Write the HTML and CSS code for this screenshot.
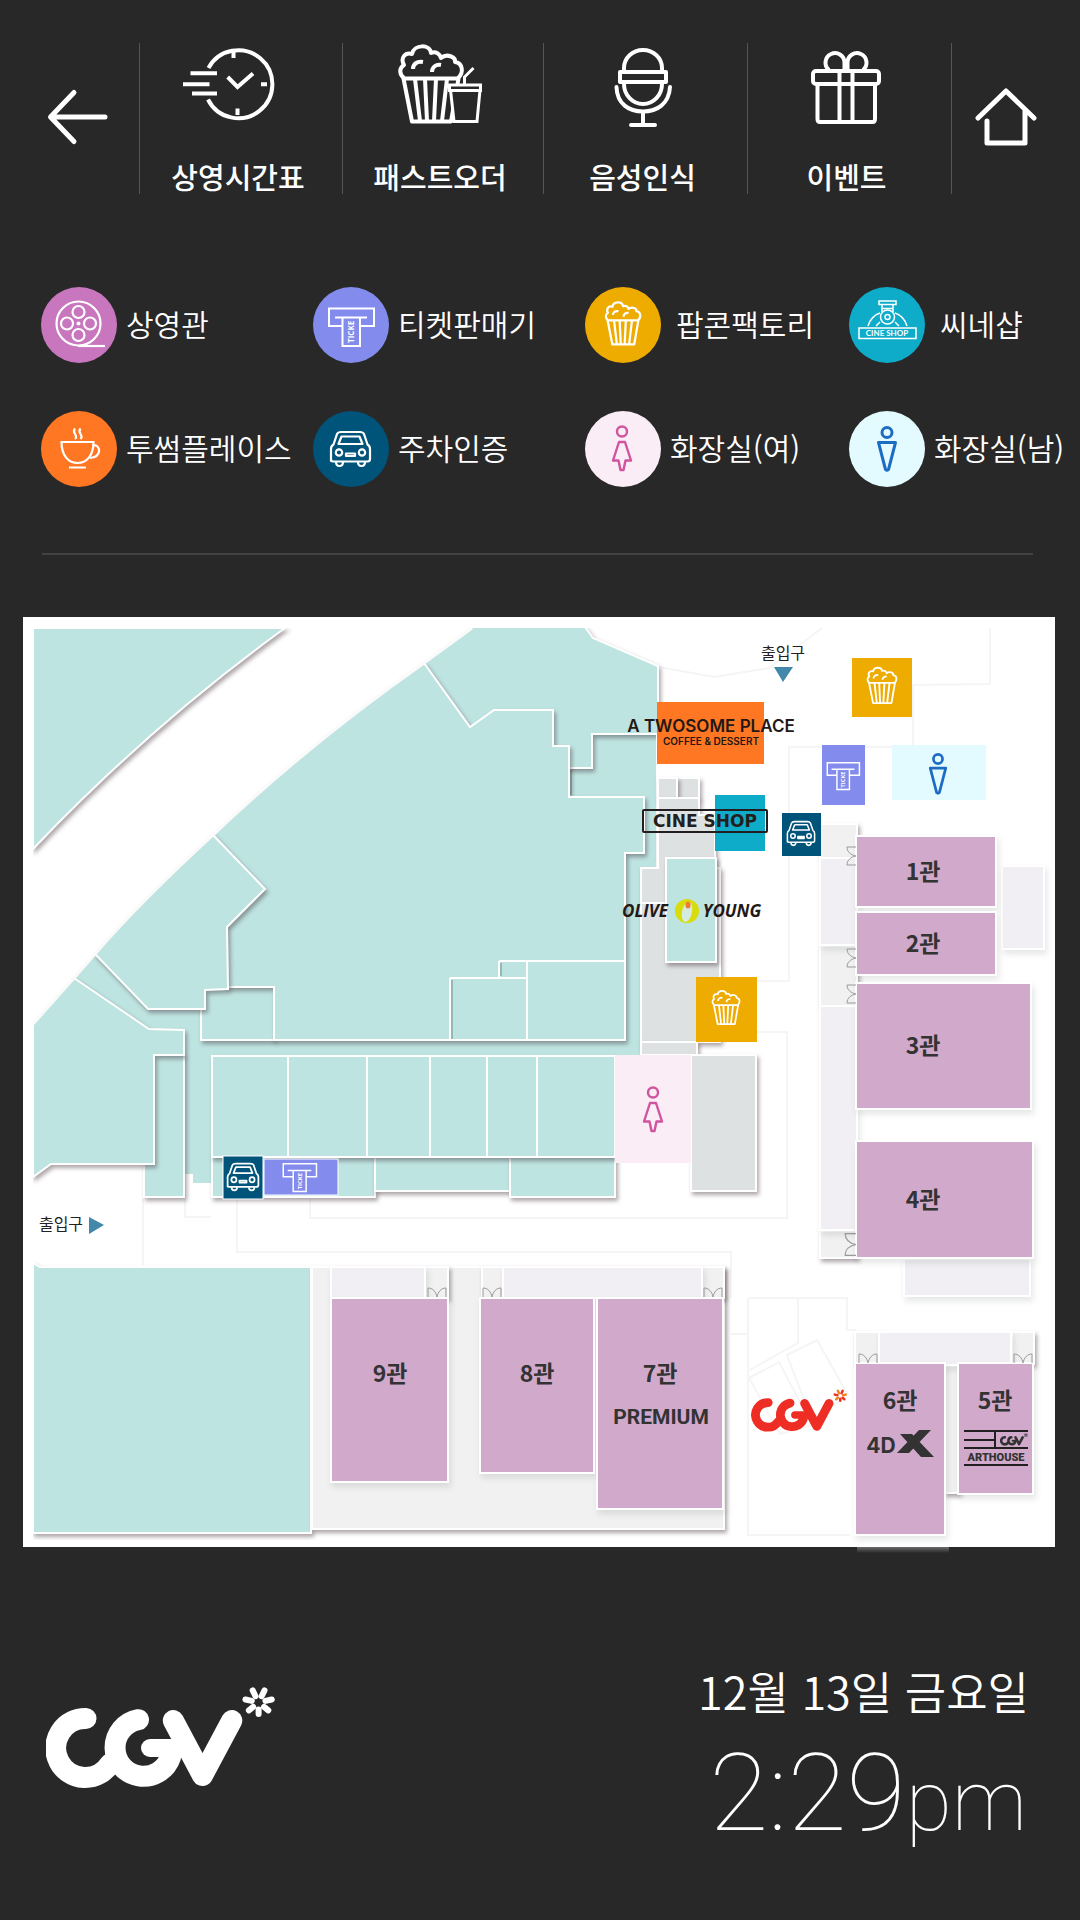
FILE: index.html
```html
<!DOCTYPE html>
<html lang="ko">
<head>
<meta charset="utf-8">
<meta name="viewport" content="width=device-width, initial-scale=1">
<title>CGV 층별 안내</title>
<link rel="stylesheet" href="styles.css">
</head>
<body>
<svg class="sprite" aria-hidden="true">
  <symbol id="popcorn" viewBox="397 43 68 80">
    <g fill="none" stroke="currentColor" stroke-width="4" stroke-linejoin="round">
      <path d="M403.500 77.500H458.500L451 120.500H412ZM415 78L420 120M425 78L427 120M436 78L434 120M447 78L442 120"/>
      <path d="M404 77C399 73 399 67 404 64C400 57 405 51 412 53C414 43 430 43 431 52C436 50 440 53 441 57C447 52 456 56 455 61C463 62 464 72 458 77"/>
      <path d="M413 68C413 63 417 60 423 61M432 71C432 66 436 63 441 64"/>
    </g>
  </symbol>
  <symbol id="ticket" viewBox="13 19 50 42">
    <g fill="none" stroke="currentColor" stroke-width="2">
      <path d="M29 39H16V21.500H61V39H48M22 30.500H54M29.500 31V59H47V31"/>
    </g>
    <text class="ticket-word" transform="translate(41 56) rotate(-90)">TICKE</text>
  </symbol>
  <symbol id="car" viewBox="16 19 43 38">
    <g fill="none" stroke="currentColor" stroke-width="2.200" stroke-linejoin="round">
      <path d="M18 50V38Q18 35 20.500 33.500L24 23Q25 21 28 21H47Q50 21 51 23L54.500 33.500Q57 35 57 38V48Q57 50.500 54.500 50.500H20Q18 50.500 18 48Z"/>
      <path d="M25.500 33L28.500 25.500H46.500L49.500 33Z"/>
      <circle cx="26" cy="41.500" r="3.200"/><circle cx="49" cy="41.500" r="3.200"/>
      <path d="M33 42.500H42V45H33ZM23 51Q23 55 26.500 55T30 51M45 51Q45 55 48.500 55T52 51"/>
    </g>
  </symbol>
  <symbol id="woman" viewBox="26 13 22 48">
    <g fill="none" stroke="currentColor" stroke-width="2.400" stroke-linejoin="round">
      <circle cx="37" cy="20.500" r="5"/>
      <path d="M34 31H40L46 49.500H40.500L38.500 59H35.500L33.500 49.500H28Z"/>
    </g>
  </symbol>
  <symbol id="man" viewBox="28 14 22 48">
    <g fill="none" stroke="currentColor" stroke-width="3" stroke-linejoin="round">
      <circle cx="39" cy="21.500" r="5"/>
      <path d="M30.500 31.500H47.500L40.500 58.500Q39 60 37.500 58.500Z"/>
    </g>
  </symbol>
  <symbol id="door" viewBox="0 0 20 10">
    <path d="M1 10V1C6 1 9 5 10 10C11 5 14 1 19 1V10" fill="none" stroke="#999" stroke-width="1"/>
  </symbol>
  <symbol id="cgv" viewBox="46 1686 230 103">
    <g fill="none" stroke="currentColor" stroke-width="21" stroke-linecap="round" stroke-linejoin="round">
      <path d="M86 1718.500A29.500 29.500 0 1 0 110 1764"/>
      <path d="M138.500 1719.700A28.500 28.500 0 1 0 170.500 1757"/>
      <path d="M150 1748H176" stroke-width="18"/>
      <path d="M173.300 1720.500L202.500 1775.500L231.800 1720.500"/>
    </g>
    <g fill="none" stroke="currentColor" stroke-width="6" stroke-linecap="round">
      <path d="M258.600 1709.500V1714"/>
      <path d="M258.600 1709.500V1716" transform="rotate(103 258.600 1702.500)"/>
      <path d="M258.600 1709.500V1716" transform="rotate(206 258.600 1702.500)"/>
      <path d="M258.600 1709.500V1715" transform="rotate(309 258.600 1702.500)"/>
    </g>
    <g class="spark" fill="none" stroke-width="6" stroke-linecap="round">
      <path d="M258.600 1709.500V1715" transform="rotate(51 258.600 1702.500)"/>
      <path d="M258.600 1709.500V1716" transform="rotate(154 258.600 1702.500)"/>
      <path d="M258.600 1709.500V1716" transform="rotate(257 258.600 1702.500)"/>
    </g>
  </symbol>
</svg>

<header>
  <nav class="topbar" aria-label="주 메뉴">
    <a class="topbar-side" href="#back" aria-label="뒤로">
      <svg class="side-icon" viewBox="46 87 64 60"><path d="M105 117H51M74 92.500L50.500 117L74 141.500" fill="none" stroke="currentColor" stroke-width="5" stroke-linecap="round" stroke-linejoin="round"/></svg>
    </a>
    <a class="topbar-item" href="#timetable">
      <svg class="menu-icon" viewBox="184 42 110 84">
        <g fill="none" stroke="currentColor" stroke-width="4">
          <path d="M209.500 67A34 34 0 1 1 209 98.500"/>
          <path d="M191.500 72.300H218M184 83.300H210.500M193 92.600H218M234.500 51V57M262 83.300H268M238.500 107.500V114M228.700 76L238.500 86L254 72.500"/>
        </g>
      </svg>
      <span>상영시간표</span>
    </a>
    <a class="topbar-item" href="#fastorder">
      <svg class="menu-icon" viewBox="385 42 110 84">
        <use href="#popcorn" x="397" y="43" width="68" height="80"/>
        <g class="cup" stroke="currentColor" stroke-width="3">
          <path d="M450.500 89L454 120.500H477L480 89Z"/>
          <path d="M449.500 84H480.500V89.500H449.500Z"/>
          <path d="M464.500 83V76L473.500 67" fill="none"/>
        </g>
      </svg>
      <span>패스트오더</span>
    </a>
    <a class="topbar-item" href="#voice">
      <svg class="menu-icon" viewBox="588 42 110 84">
        <g fill="none" stroke="currentColor" stroke-width="4" stroke-linejoin="round" stroke-linecap="round">
          <path d="M624 70V67A19 18 0 0 1 662 67V70M624 83A19 20 0 0 0 662 83M616.500 86C617 103 629 110.500 643 110.500S669 103 670 86M643 111V123M631 124H655"/>
          <path d="M620 71H666V81H620Z"/>
        </g>
      </svg>
      <span>음성인식</span>
    </a>
    <a class="topbar-item" href="#event">
      <svg class="menu-icon" viewBox="792 42 110 84">
        <g fill="none" stroke="currentColor" stroke-width="4">
          <rect x="813" y="70" width="66" height="13" rx="3"/>
          <path d="M817.500 83V118Q817.500 121 820 121H872.500Q875 121 875 118V83M839.500 70V121M852.500 70V121"/>
          <path d="M844.500 70V62A9.500 9.500 0 1 0 829 69M847.500 70V62A9.500 9.500 0 1 1 863 69"/>
        </g>
      </svg>
      <span>이벤트</span>
    </a>
    <a class="topbar-side topbar-side--home" href="#home" aria-label="홈">
      <svg class="side-icon" viewBox="974 87 64 60"><path d="M978 118L1006 91L1034 118M987 121V143H1025V110" fill="none" stroke="currentColor" stroke-width="5" stroke-linecap="round" stroke-linejoin="round"/></svg>
    </a>
  </nav>
</header>

<main>
  <ul class="legend">
    <li class="legend-item"><span class="badge badge--film"><svg viewBox="0 0 76 76"><g fill="none" stroke="currentColor" stroke-width="2.200"><circle cx="37.500" cy="36.500" r="22"/><circle cx="37.500" cy="25" r="6"/><circle cx="37.500" cy="48" r="6"/><circle cx="26" cy="36.500" r="6"/><circle cx="49" cy="36.500" r="6"/><path d="M37 59H64"/></g><circle cx="37.500" cy="36.500" r="2" fill="currentColor"/></svg></span><span class="legend-name">상영관</span></li>
    <li class="legend-item"><span class="badge badge--ticket"><svg viewBox="0 0 76 76"><use href="#ticket" x="13" y="19" width="50" height="42"/></svg></span><span class="legend-name">티켓판매기</span></li>
    <li class="legend-item legend-item--wide"><span class="badge badge--popcorn"><svg viewBox="0 0 76 76"><use href="#popcorn" x="19" y="14" width="38" height="45"/></svg></span><span class="legend-name">팝콘팩토리</span></li>
    <li class="legend-item legend-item--wide"><span class="badge badge--shop"><svg viewBox="0 0 76 76"><g fill="none" stroke="currentColor" stroke-width="1.500"><path d="M10 41H67V51.500H10ZM19 39Q22 29 31 26M46 26Q55 29 58 39M30 14H47V17.500H30ZM33 18V25M44 18V25M33 21.500H44M31 35L27 39M46 35L50 39"/><circle cx="38.500" cy="30" r="7"/><circle cx="38.500" cy="30" r="2.500"/></g><text class="banner-word" x="38" y="49">CINE SHOP</text></svg></span><span class="legend-name">씨네샵</span></li>
    <li class="legend-item"><span class="badge badge--cafe"><svg viewBox="0 0 76 76"><path d="M20.500 31H52.500C52.500 44 46 52 36.500 52S20.500 44 20.500 31ZM52.500 34C60 34 61 46 49 47M28 56.500H45M34 28Q36 26 34 23T34 17.500M39.500 28Q41.500 26 39.500 23T39.500 17.500" fill="none" stroke="currentColor" stroke-width="2.200"/></svg></span><span class="legend-name">투썸플레이스</span></li>
    <li class="legend-item"><span class="badge badge--car"><svg viewBox="0 0 76 76"><use href="#car" x="16" y="19" width="43" height="38"/></svg></span><span class="legend-name">주차인증</span></li>
    <li class="legend-item"><span class="badge badge--woman"><svg viewBox="0 0 76 76"><use href="#woman" x="26" y="13" width="22" height="48"/></svg></span><span class="legend-name">화장실(여)</span></li>
    <li class="legend-item"><span class="badge badge--man"><svg viewBox="0 0 76 76"><use href="#man" x="27" y="14" width="22" height="48"/></svg></span><span class="legend-name">화장실(남)</span></li>
  </ul>
  <hr class="rule">

  <svg class="map" viewBox="23 617 1032 930" role="img" aria-label="층 안내도">
    <defs>
      <linearGradient id="fade" x2="0" y2="1"><stop stop-color="#6a6a6a"/><stop offset="1" stop-color="#282828"/></linearGradient>
      <clipPath id="floor"><rect x="33" y="628" width="1016" height="912"/></clipPath>
    </defs>
    <rect class="paper" x="23" y="617" width="1032" height="930"/>

    <g class="faint">
      <path d="M657 666L664 668L715 677L769 668L822 628M990 628V684L913 685V747H789V981H757M757 1032H787V1218H310V1199M237 1199V1252H731V1298M731 1334H748M748 1298H847V1330H856M748 1298V1535H850M798 1298V1343L748 1371M749 1378L779 1362L812 1425L780 1434ZM787 1355L817 1340L848 1395L812 1420ZM185 1174V1217H211M143 1199V1265"/>
    </g>

    <g clip-path="url(#floor)">
      <path class="shop raised" d="M33 628H285Q149 727 33 849Z"/>
      <path class="shop-base" d="M472 628L424 663Q310 743 213 835Q140 902 95 954L74 978L33 1024V1100H184V1174H193V1183H212V1056H641V868H658V666L593 638L585 628Z"/>
      <g class="shop raised">
        <path d="M424 663L472 627H585L593 638L658 666V734H592V768H569L470 727Z"/>
        <path d="M144 1055H184V1197H144Z"/>
        <path d="M33 1024L74 978L149 1029L184 1030V1055H154V1164H51L33 1177Z"/>
        <path d="M201 987H274V1040H201Z"/>
        <path d="M424 663L470 727L494 710H553V746H569V797H644V853H625V1040H274V987H228L227 927L265 889L213 835Q310 743 424 663Z"/>
        <path d="M213 835L265 889L227 927L228 989L205 990V1009H148L95 954Q140 902 213 835Z"/>
        <path d="M212 1157H375V1197H212Z"/><path d="M375 1157H510V1191H375Z"/><path d="M510 1157H615V1197H510Z"/>
        <path d="M212 1056H615V1157H212Z"/>
        <path d="M33 1263L40 1267H311V1533H33Z"/>
      </g>
      <path class="seam" d="M288 1056V1157M367 1056V1157M430 1056V1157M487 1056V1157M537 1056V1157M499 961H625M499 961V978M450 978H527M450 978V1040M527 961V1040M657 734V868"/>
      <path class="inner" d="M452 1039V980M501 976V963M571 770V795"/>
      <path class="curve" d="M472 628L424 663Q310 743 213 835Q140 902 95 954L74 978L33 1024"/>
    </g>

    <g class="block raised">
      <rect x="677" y="778" width="22" height="20"/><rect x="658" y="778" width="19" height="20"/>
      <path d="M658 798H699V815H715V868H720V1042H641V868H658Z"/>
      <rect x="641" y="1042" width="56" height="13"/>
      <rect x="691" y="1055" width="65" height="136"/>
    </g>
    <path class="seam" d="M641 903H666"/>
    <rect class="shop raised" x="666" y="858" width="50" height="104"/>

    <g class="room raised">
      <rect x="312" y="1267" width="412" height="262"/>
      <rect x="425" y="1267" width="23" height="31"/><rect x="482" y="1267" width="21" height="31"/><rect x="702" y="1267" width="22" height="31"/>
      <rect x="820" y="824" width="37" height="34"/><rect x="820" y="946" width="37" height="60"/><rect x="820" y="1231" width="37" height="27"/>
      <rect x="855" y="1332" width="24" height="32"/><rect x="1012" y="1332" width="22" height="32"/><rect x="945" y="1366" width="14" height="127"/>
    </g>
    <path class="seam" d="M40 1267H311V1533H33"/>
    <g class="hallway soft">
      <rect x="331" y="1267" width="94" height="31"/><rect x="503" y="1267" width="199" height="31"/>
      <rect x="820" y="858" width="37" height="87"/><rect x="820" y="1006" width="37" height="224"/>
      <rect x="1002" y="866" width="42" height="83"/><rect x="904" y="1259" width="126" height="37"/>
      <rect x="879" y="1332" width="132" height="33"/>
    </g>

    <g class="hall soft">
      <rect x="856" y="836" width="140" height="71"/><rect x="856" y="912" width="140" height="63"/>
      <rect x="856" y="983" width="175" height="126"/><rect x="856" y="1141" width="177" height="117"/>
      <rect x="331" y="1298" width="117" height="184"/><rect x="480" y="1298" width="114" height="175"/>
      <rect x="597" y="1298" width="126" height="211"/><rect x="855" y="1363" width="90" height="172"/>
      <rect x="958" y="1363" width="75" height="131"/>
    </g>
    <rect x="857" y="1547" width="92" height="6" fill="url(#fade)"/>

    <use href="#door" x="427" y="1287" width="20" height="10"/><use href="#door" x="482" y="1287" width="20" height="10"/>
    <use href="#door" x="703" y="1287" width="20" height="10"/><use href="#door" x="858" y="1353" width="20" height="10"/>
    <use href="#door" x="1013" y="1353" width="20" height="10"/>
    <g transform="rotate(-90)">
      <use href="#door" x="-866" y="846" width="20" height="10"/><use href="#door" x="-968" y="846" width="20" height="10"/>
      <use href="#door" x="-1004" y="846" width="20" height="10"/><use href="#door" x="-1257" y="844" width="25" height="12"/>
    </g>

    <rect class="fill--cafe" x="657" y="702" width="107" height="62"/>
    <rect class="fill--shop" x="715" y="795" width="50" height="56"/>
    <rect class="fill--popcorn" x="852" y="658" width="60" height="59"/>
    <rect class="fill--popcorn" x="696" y="977" width="61" height="65"/>
    <rect class="fill--ticket" x="822" y="745" width="43" height="60"/>
    <rect class="fill--man" x="892" y="745" width="94" height="55"/>
    <rect class="fill--car" x="782" y="813" width="39" height="43"/>
    <rect class="fill--woman" x="615" y="1055" width="76" height="108"/>
    <rect class="fill--ticket edge" x="264" y="1159" width="74" height="36"/>
    <rect class="fill--car edge" x="223" y="1156" width="40" height="43"/>

    <g class="on-color">
      <use href="#popcorn" x="866" y="666" width="32" height="39"/><use href="#popcorn" x="711" y="989" width="30" height="37"/>
      <use href="#ticket" x="825" y="761" width="36" height="30"/><use href="#ticket" x="281" y="1162" width="37" height="31"/>
      <use href="#car" x="786" y="820" width="30" height="27"/><use href="#car" x="226" y="1162" width="34" height="30"/>
    </g>
    <use class="ink--woman" href="#woman" x="642" y="1085" width="22" height="48"/>
    <use class="ink--man" href="#man" x="928" y="752" width="20" height="44"/>

    <path class="pointer" d="M774 667H793L783 682ZM89 1217L104 1225L89 1234Z"/>
    <g class="gate"><text x="783" y="659">출입구</text><text x="61" y="1230">출입구</text></g>

    <g class="hall-name">
      <text x="923" y="880">1관</text><text x="923" y="952">2관</text><text x="923" y="1054">3관</text><text x="923" y="1208">4관</text>
      <text x="995" y="1409">5관</text><text x="900" y="1409">6관</text><text x="660" y="1382">7관</text><text x="537" y="1382">8관</text><text x="390" y="1382">9관</text>
    </g>
    <text class="premium" x="661" y="1424">PREMIUM</text>
    <text class="twosome" x="711" y="732">A TWOSOME PLACE</text>
    <text class="twosome-sub" x="711" y="745">COFFEE &amp; DESSERT</text>
    <rect class="frame" x="643" y="810" width="124" height="22" rx="1"/>
    <text class="cineshop" x="705" y="827">CINE SHOP</text>
    <text class="olive" x="645" y="917">OLIVE</text>
    <ellipse cx="687" cy="911" rx="12" ry="12" fill="#d7dc0a"/>
    <ellipse cx="687" cy="912" rx="5" ry="10" fill="#d3ebe0" transform="rotate(12 687 912)"/>
    <ellipse cx="688" cy="905" rx="2.500" ry="3.500" fill="#f47a2c"/>
    <text class="olive" x="732" y="917">YOUNG</text>
    <use class="brand-red" href="#cgv" x="751" y="1389" width="97" height="43"/>
    <text class="fourdx" x="881" y="1453">4D</text>
    <path d="M900 1434H912L934 1457H921ZM897 1453L919 1430H931L909 1453Z" fill="#333"/>
    <path class="frame" d="M964 1431H1028M964 1440H995M995 1431V1448M964 1448H1028M964 1465H1028"/>
    <use class="brand-dark" href="#cgv" x="1000" y="1433" width="28" height="13"/>
    <text class="arthouse" x="996" y="1461">ARTHOUSE</text>
  </svg>
</main>

<footer class="footer">
  <svg class="logo" viewBox="46 1686 230 103" role="img" aria-label="CGV"><use href="#cgv" x="46" y="1686" width="230" height="103"/></svg>
  <div class="clock">
    <p class="date">12월 13일 금요일</p>
    <p class="time">2:29<span class="meridiem">pm</span></p>
  </div>
</footer>
</body>
</html>
```

FILE: styles.css
```css
:root {
  --bg: #282828;
  --film: #c876be;
  --ticket: #838cec;
  --popcorn: #eeab00;
  --shop: #0facca;
  --cafe: #ff7722;
  --car: #00547a;
  --woman: #faedf5;
  --man: #e3faff;
  --woman-ink: #d0549f;
  --man-ink: #1d6cc4;
  --korean: "Noto Sans CJK KR", sans-serif;
}

* { box-sizing: border-box; }

body {
  margin: 0;
  background: var(--bg);
  color: #fff;
  font-family: var(--korean);
}

.sprite { display: none; }

/* Top menu */
.topbar {
  display: grid;
  grid-template-columns: 139fr 203fr 201fr 204fr 204fr 129fr;
  padding-top: 43px;
}

.topbar a {
  display: flex;
  align-items: center;
  min-height: 151px;
  color: #fff;
  text-decoration: none;
}

.topbar-item {
  flex-direction: column;
  padding-right: 6px;
  border-left: 1px solid #555;
  font-size: 29px;
  font-weight: 500;
  line-height: 36px;
}

.menu-icon { width: 110px; height: 84px; margin-bottom: 31px; }
.cup { fill: var(--bg); }
.topbar-side { justify-content: center; padding: 0 0 4px 16px; }
.topbar a.topbar-side--home { padding: 0 20px 4px 0; border-left: 1px solid #555; }
.side-icon { width: 64px; height: 60px; }

/* Legend */
.legend {
  display: grid;
  grid-template-columns: 272fr 272fr 264fr 231fr;
  row-gap: 48px;
  margin: 93px 0 0;
  padding: 0 0 0 41px;
  list-style: none;
}

.legend-item {
  display: flex;
  align-items: center;
  gap: 9px;
  font-size: 30px;
  font-weight: 350;
  line-height: 40px;
  white-space: nowrap;
}

.legend-item--wide { gap: 15px; }
.legend-name { padding-bottom: 5px; }

.badge {
  flex: none;
  width: 76px;
  height: 76px;
  border-radius: 50%;
}

.badge svg { display: block; width: 100%; height: 100%; }
.badge--film { background: var(--film); }
.badge--ticket { background: var(--ticket); }
.badge--popcorn { background: var(--popcorn); }
.badge--shop { background: var(--shop); }
.badge--cafe { background: var(--cafe); }
.badge--car { background: var(--car); }
.badge--woman { background: var(--woman); color: var(--woman-ink); }
.badge--man { background: var(--man); color: var(--man-ink); }

.ticket-word { font: 700 8px "Open Sans", sans-serif; fill: currentColor; }
.banner-word { font: 700 8px Lato, sans-serif; fill: currentColor; text-anchor: middle; }

.rule {
  height: 2px;
  margin: 66px 47px 62px 42px;
  border: 0;
  background: #424242;
}

/* Floor map */
.map {
  display: block;
  width: calc(100% - 48px);
  margin-left: 23px;
  overflow: visible;
}

.paper { fill: #fff; }
.shop, .shop-base { fill: #bee4e1; }
.block { fill: #dee1e1; }
.room { fill: #f1f1f1; }
.hallway { fill: #f1eff3; }
.hall { fill: #d1a9cb; }
.shop, .block, .room, .hallway, .hall { stroke: #fff; stroke-width: 2; }
.raised:not(g), g.raised > * { filter: drop-shadow(2px 3px 2px rgba(50, 30, 40, .4)); }
.soft > * { filter: drop-shadow(2px 4px 3px rgba(40, 50, 50, .12)); }
.seam { fill: none; stroke: #fff; stroke-width: 2; }
.inner { fill: none; stroke: rgba(60, 80, 80, .3); stroke-width: 2; }
.curve { fill: none; stroke: #fafafa; stroke-width: 3; }
.faint { fill: none; stroke: #f5f5f5; stroke-width: 2; }
.edge { stroke: #fff; stroke-width: 1; }

.fill--cafe { fill: var(--cafe); }
.fill--shop { fill: var(--shop); }
.fill--popcorn { fill: var(--popcorn); }
.fill--ticket { fill: var(--ticket); }
.fill--man { fill: var(--man); }
.fill--woman { fill: var(--woman); }
.fill--car { fill: var(--car); }
.on-color { color: #fff; }
.ink--woman { color: var(--woman-ink); }
.ink--man { color: var(--man-ink); }

.map > text, .gate, .hall-name { text-anchor: middle; }
.pointer { fill: #4188ab; }
.gate { fill: #222; font-size: 16px; }
.hall-name { fill: #333; font-size: 23px; font-weight: 700; }
.premium { fill: #333; font: 700 21px Roboto, sans-serif; }
.twosome { fill: #231815; font: 600 17px Inter, sans-serif; }
.twosome-sub { fill: #231815; font: 600 10px Inter, sans-serif; }
.cineshop { fill: #231f20; font: 700 17px "DejaVu Sans", sans-serif; }
.olive { fill: #231815; font: italic 700 17px "Open Sans", sans-serif; }
.fourdx { fill: #333; font: 700 21px Inter, sans-serif; }
.arthouse { fill: #333; font: 900 11px Roboto, sans-serif; }
.frame { fill: none; stroke: #231f20; stroke-width: 2; }
.spark { stroke: var(--spark, currentColor); }
.brand-red { color: #ee2e24; --spark: #f58220; }
.brand-dark { color: #333; }

/* Footer */
.footer {
  display: flex;
  justify-content: space-between;
  align-items: flex-start;
  padding: 111px 51px 50px 46px;
}

.logo { width: 230px; height: 103px; margin-top: 28px; }
.clock { text-align: right; }
.date, .time { margin: 0; }
.date { font-size: 45px; font-weight: 350; line-height: 66px; }
.time { padding: 9px 2px 0 0; font: 100 108px/120px Roboto, sans-serif; }
.meridiem { font-size: 84px; }
```
